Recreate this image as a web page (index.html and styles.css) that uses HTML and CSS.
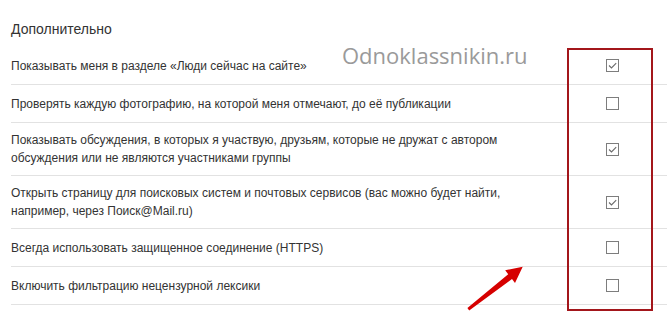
FILE: index.html
```html
<!DOCTYPE html>
<html lang="ru">
<head>
<meta charset="utf-8">
<link rel="stylesheet" href="styles.css">
</head>
<body>
<div class="page">
  <div class="title">Дополнительно</div>
  <div class="rows">
    <div class="row">
      <div class="label">Показывать меня в разделе «Люди сейчас на сайте»</div>
      <div class="cb-cell"><span class="cb checked"><svg viewBox="0 0 11 11"><path d="M2 5.5 L4.5 8 L9.2 3.2"/></svg></span></div>
    </div>
    <div class="row">
      <div class="label">Проверять каждую фотографию, на которой меня отмечают, до её публикации</div>
      <div class="cb-cell"><span class="cb"></span></div>
    </div>
    <div class="row">
      <div class="label">Показывать обсуждения, в которых я участвую, друзьям, которые не дружат с автором обсуждения или не являются участниками группы</div>
      <div class="cb-cell"><span class="cb checked"><svg viewBox="0 0 11 11"><path d="M2 5.5 L4.5 8 L9.2 3.2"/></svg></span></div>
    </div>
    <div class="row">
      <div class="label">Открыть страницу для поисковых систем и почтовых сервисов (вас можно будет найти, например, через Поиск@Mail.ru)</div>
      <div class="cb-cell"><span class="cb checked"><svg viewBox="0 0 11 11"><path d="M2 5.5 L4.5 8 L9.2 3.2"/></svg></span></div>
    </div>
    <div class="row">
      <div class="label">Всегда использовать защищенное соединение (HTTPS)</div>
      <div class="cb-cell"><span class="cb"></span></div>
    </div>
    <div class="row">
      <div class="label">Включить фильтрацию нецензурной лексики</div>
      <div class="cb-cell"><span class="cb"></span></div>
    </div>
  </div>
  <div class="watermark">Odnoklassnikin.ru</div>
  <div class="highlight"></div>
  <svg class="arrow" width="667" height="323" viewBox="0 0 667 323">
    <polygon points="469.2,310.5 512,279 515,282.9 522.7,266.7 505.2,270.3 508.2,274.2 467.4,308.1" fill="#d60000"/>
  </svg>
</div>
</body>
</html>
```
FILE: styles.css
```css
html, body {
  margin: 0;
  padding: 0;
  background: #fff;
}
.page {
  position: relative;
  width: 667px;
  height: 323px;
  overflow: hidden;
  padding: 20px 0 0 11px;
  box-sizing: border-box;
  font-family: "Liberation Sans", Arial, sans-serif;
  color: #333;
}
.title {
  font-size: 14px;
  line-height: 18px;
  margin-bottom: 9px;
}
.row {
  display: flex;
  align-items: center;
  justify-content: space-between;
  padding: 8px 48px 8px 0;
  border-bottom: 1px solid #e2e2e2;
}
.label {
  width: 510px;
  font-size: 12px;
  line-height: 18px;
}
.cb-cell {
  height: 21px;
  display: flex;
  align-items: center;
}
.cb {
  display: block;
  width: 13px;
  height: 13px;
  box-sizing: border-box;
  border: 1px solid #7d7d7d;
  background: #fff;
}
.cb svg {
  display: block;
  width: 11px;
  height: 11px;
}
.cb svg path {
  fill: none;
  stroke: #6a6a6a;
  stroke-width: 1.1;
}
.watermark {
  position: absolute;
  left: 342px;
  top: 42px;
  font-family: "Open Sans", sans-serif;
  font-size: 22px;
  line-height: 26px;
  color: #9a9a9a;
}
.highlight {
  position: absolute;
  left: 567px;
  top: 48px;
  width: 86px;
  height: 263px;
  box-sizing: border-box;
  border: 2px solid #a3161b;
}
.arrow {
  position: absolute;
  left: 0;
  top: 0;
  pointer-events: none;
}
```
